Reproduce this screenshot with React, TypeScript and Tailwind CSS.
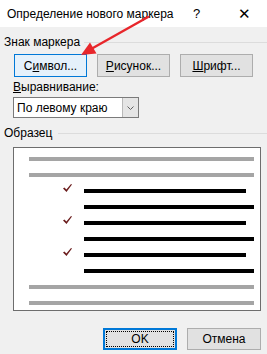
import React from 'react';

const BTN = 'h-[23px] w-[73px] border text-[12px] leading-none flex items-center justify-center text-black';

function Check() {
  return (
    <svg width="9" height="8" viewBox="0 0 9 8" className="shrink-0">
      <polygon points="0,4.4 1.4,3.4 3.4,5.4 8,0 9,0.6 3.5,8" fill="#6b1d1d" />
    </svg>
  );
}

function SampleLine({ kind }: { kind: 'grey' | 'short' | 'long' }) {
  if (kind === 'grey') return <div className="h-[4px] ml-[15px] w-[225px] bg-[#a5a5a5]" />;
  return (
    <div className={`h-[4px] ml-[70px] bg-black ${kind === 'short' ? 'w-[162px]' : 'w-[170px]'}`} />
  );
}

export default function App() {
  const rows: ('grey' | 'short' | 'long')[] = ['grey', 'grey', 'short', 'long', 'short', 'long', 'short', 'long', 'grey', 'grey'];

  return (
    <div className="relative w-[267px] h-[354px] bg-[#f0f0f0] overflow-hidden font-['Liberation_Sans',Arial,sans-serif] text-[12px] text-black">
      {/* title bar */}
      <div className="h-[27px] bg-white flex items-center pl-[7px]">
        <span>Определение нового маркера</span>
        <span className="ml-auto w-[14px] text-[13px]">?</span>
        <span className="ml-[31px] mr-[16px] text-[15px] leading-none font-light">✕</span>
      </div>

      {/* Знак маркера */}
      <div className="flex items-center mt-[8px] pl-[4px] h-[14px]">
        <span>Знак маркера</span>
        <div className="flex-1 h-px bg-[#dcdcdc] ml-[4px]" />
      </div>
      <div className="flex gap-[10px] pl-[14px] mt-[5px]">
        <button className={`${BTN} bg-[#e5f1fb] border-[#0078d7]`}>
          С<span className="underline">и</span>мвол...
        </button>
        <button className={`${BTN} bg-[#e1e1e1] border-[#adadad]`}>
          <span className="underline">Р</span>исунок...
        </button>
        <button className={`${BTN} bg-[#e1e1e1] border-[#adadad]`}>
          <span className="underline">Ш</span>рифт...
        </button>
      </div>

      {/* Выравнивание */}
      <div className="pl-[13px] mt-[3px] h-[14px] leading-[14px]">
        <span className="underline">В</span>ыравнивание:
      </div>
      <div className="ml-[13px] mt-[3px] w-[126px] h-[21px] flex border border-[#7a7a7a] bg-white">
        <div className="flex-1 flex items-center pl-[3px]">По левому краю</div>
        <div className="w-[16px] bg-[#e5e5e5] border-l border-[#b9b9b9] flex items-center justify-center">
          <svg width="7" height="4" viewBox="0 0 7 4">
            <path d="M0.5 0.5 L3.5 3.5 L6.5 0.5" stroke="#606060" fill="none" strokeWidth="1" />
          </svg>
        </div>
      </div>

      {/* Образец */}
      <div className="flex items-center mt-[8px] pl-[4px] h-[14px]">
        <span>Образец</span>
        <div className="flex-1 h-px bg-[#dcdcdc] ml-[6px]" />
      </div>
      <div className="ml-[13px] mt-[7px] w-[248px] h-[164px] border border-[#6d6d6d] bg-white pt-[9px] flex flex-col gap-[12px]">
        {rows.map((k, i) => (
          <div key={i} className="relative h-[4px]">
            <SampleLine kind={k} />
            {k === 'short' && (
              <div className="absolute left-[49px] top-[-5px]">
                <Check />
              </div>
            )}
          </div>
        ))}
      </div>

      {/* buttons */}
      <div className="flex gap-[10px] pl-[103px] mt-[17px]">
        <button className="h-[22px] w-[74px] border-2 border-[#0078d7] bg-[#e1e1e1] p-[1px]">
          <div className="w-full h-full border border-dotted border-black flex items-center justify-center">OK</div>
        </button>
        <button className="h-[22px] w-[74px] border border-[#adadad] bg-[#e1e1e1] flex items-center justify-center">
          Отмена
        </button>
      </div>

      {/* red arrow */}
      <svg className="absolute left-0 top-0 pointer-events-none" width="267" height="80">
        <line x1="148" y1="17" x2="92" y2="48.5" stroke="#e8262b" strokeWidth="2.4" strokeLinecap="round" />
        <polygon points="81,55 96.5,53.5 90,42.5" fill="#e8262b" />
      </svg>
    </div>
  );
}
